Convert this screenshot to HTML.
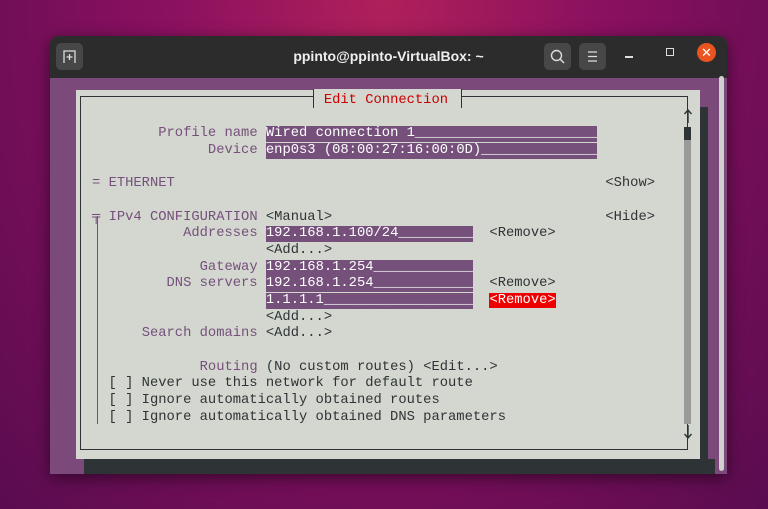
<!DOCTYPE html>
<html><head><meta charset="utf-8"><style>
*{margin:0;padding:0;box-sizing:border-box}
body{width:768px;height:509px;overflow:hidden;position:relative;
background:radial-gradient(ellipse at 50% 0%,#b0205a 0%,#8a1060 40%,#5a0c50 100%);font-family:"Liberation Sans",sans-serif}
.abs{position:absolute}
#win{left:50px;top:36px;width:677px;height:438px;background:#7b4a7b;border-radius:8px 8px 0 0;overflow:hidden;box-shadow:0 4px 16px rgba(0,0,0,.5)}
#tb{left:0;top:0;width:677px;height:42px;background:#2c2c2c;color:#eee}
.btn{background:#474747;border-radius:5px;width:27px;height:27px;top:7px}
#dlg{left:26px;top:54px;width:624px;height:369px;background:#d3d7cf}
pre{font-family:"Liberation Mono",monospace;font-size:13.8px;line-height:16.67px;color:#2e3436;position:absolute;left:92px;top:93px;white-space:pre}
.l{color:#75507b}
.f{background:#75507b;color:#fff;display:inline-block;height:16px;line-height:16px;overflow:hidden;vertical-align:top}
.r{color:#cc0000}
.h{background:#ef0000;color:#fff}
</style></head><body>
<div id="win" class="abs">
 <div id="tb" class="abs">
  <div class="abs btn" style="left:6px"><svg width="27" height="27"><path d="M8 20V8h11v12M13.5 11v6M10.5 14h6" stroke="#ddd" stroke-width="1.3" fill="none"/></svg></div>
  <div class="abs" style="left:0;width:677px;top:12px;text-align:center;font-size:14px;font-weight:bold;color:#eee">ppinto@ppinto-VirtualBox: ~</div>
  <div class="abs btn" style="left:494px"><svg width="27" height="27"><circle cx="12.5" cy="12.5" r="5" stroke="#ddd" stroke-width="1.4" fill="none"/><path d="M16 16l4 4" stroke="#ddd" stroke-width="1.5"/></svg></div>
  <div class="abs btn" style="left:529px"><svg width="27" height="27"><path d="M9 9h9M9 13.5h9M9 18h9" stroke="#ddd" stroke-width="1.3"/></svg></div>
  <div class="abs" style="left:575px;top:20px;width:8px;height:2px;background:#ddd"></div>
  <div class="abs" style="left:616px;top:12px;width:8px;height:8px;border:1.5px solid #ddd"></div>
  <div class="abs" style="left:647px;top:7px;width:19px;height:19px;border-radius:50%;background:#e95420;color:#fff;font-size:13px;text-align:center;line-height:19px">✕</div>
 </div>
 <div id="dlg" class="abs"></div>
 <div class="abs" style="left:34px;top:423px;width:631px;height:15px;background:#2e3436"></div>
 <div class="abs" style="left:650px;top:71px;width:8px;height:367px;background:#2e3436"></div>
 <div class="abs" style="left:669px;top:40px;width:5px;height:395px;background:#d0d0d0;border-radius:3px"></div>
 <div class="abs" style="left:30px;top:60px;width:608px;height:354px;border:1px solid #2e3436"></div>
 <div class="abs" style="left:634px;top:104px;width:7px;height:284px;background:#9a9a9a"></div>
 <div class="abs" style="left:634px;top:91px;width:7px;height:13px;background:#2e3436"></div>
 <div class="abs" style="left:47px;top:180px;width:1px;height:208px;background:#75507b"></div>
 <svg class="abs" style="left:633px;top:73px" width="10" height="14"><path d="M5 1v13M1.5 5L5 1l3.5 4" stroke="#2e3436" stroke-width="1.4" fill="none"/></svg>
 <svg class="abs" style="left:633px;top:389px" width="10" height="14"><path d="M5 0v13M1.5 9L5 13l3.5-4" stroke="#2e3436" stroke-width="1.4" fill="none"/></svg>
</div>
<div class="abs" style="left:313px;top:89px;width:149px;height:19px;background:#d3d7cf;border-left:1px solid #2e3436;border-right:1px solid #2e3436"></div>
<pre>                            <span class="r">Edit Connection</span>

        <span class="l">Profile name</span> <span class="f">Wired connection 1______________________</span>
              <span class="l">Device</span> <span class="f">enp0s3 (08:00:27:16:00:0D)______________</span>

<span class="l">=</span> <span class="l">ETHERNET</span>                                                    &lt;Show&gt;

<span class="l">╤</span> <span class="l">IPv4 CONFIGURATION</span> &lt;Manual&gt;                                 &lt;Hide&gt;
           <span class="l">Addresses</span> <span class="f">192.168.1.100/24_________</span>  &lt;Remove&gt;
                     &lt;Add...&gt;
             <span class="l">Gateway</span> <span class="f">192.168.1.254____________</span>
         <span class="l">DNS servers</span> <span class="f">192.168.1.254____________</span>  &lt;Remove&gt;
                     <span class="f">1.1.1.1__________________</span>  <span class="h">&lt;Remove&gt;</span>
                     &lt;Add...&gt;
      <span class="l">Search domains</span> &lt;Add...&gt;

             <span class="l">Routing</span> (No custom routes) &lt;Edit...&gt;
  [ ] Never use this network for default route
  [ ] Ignore automatically obtained routes
  [ ] Ignore automatically obtained DNS parameters</pre>
</body></html>
